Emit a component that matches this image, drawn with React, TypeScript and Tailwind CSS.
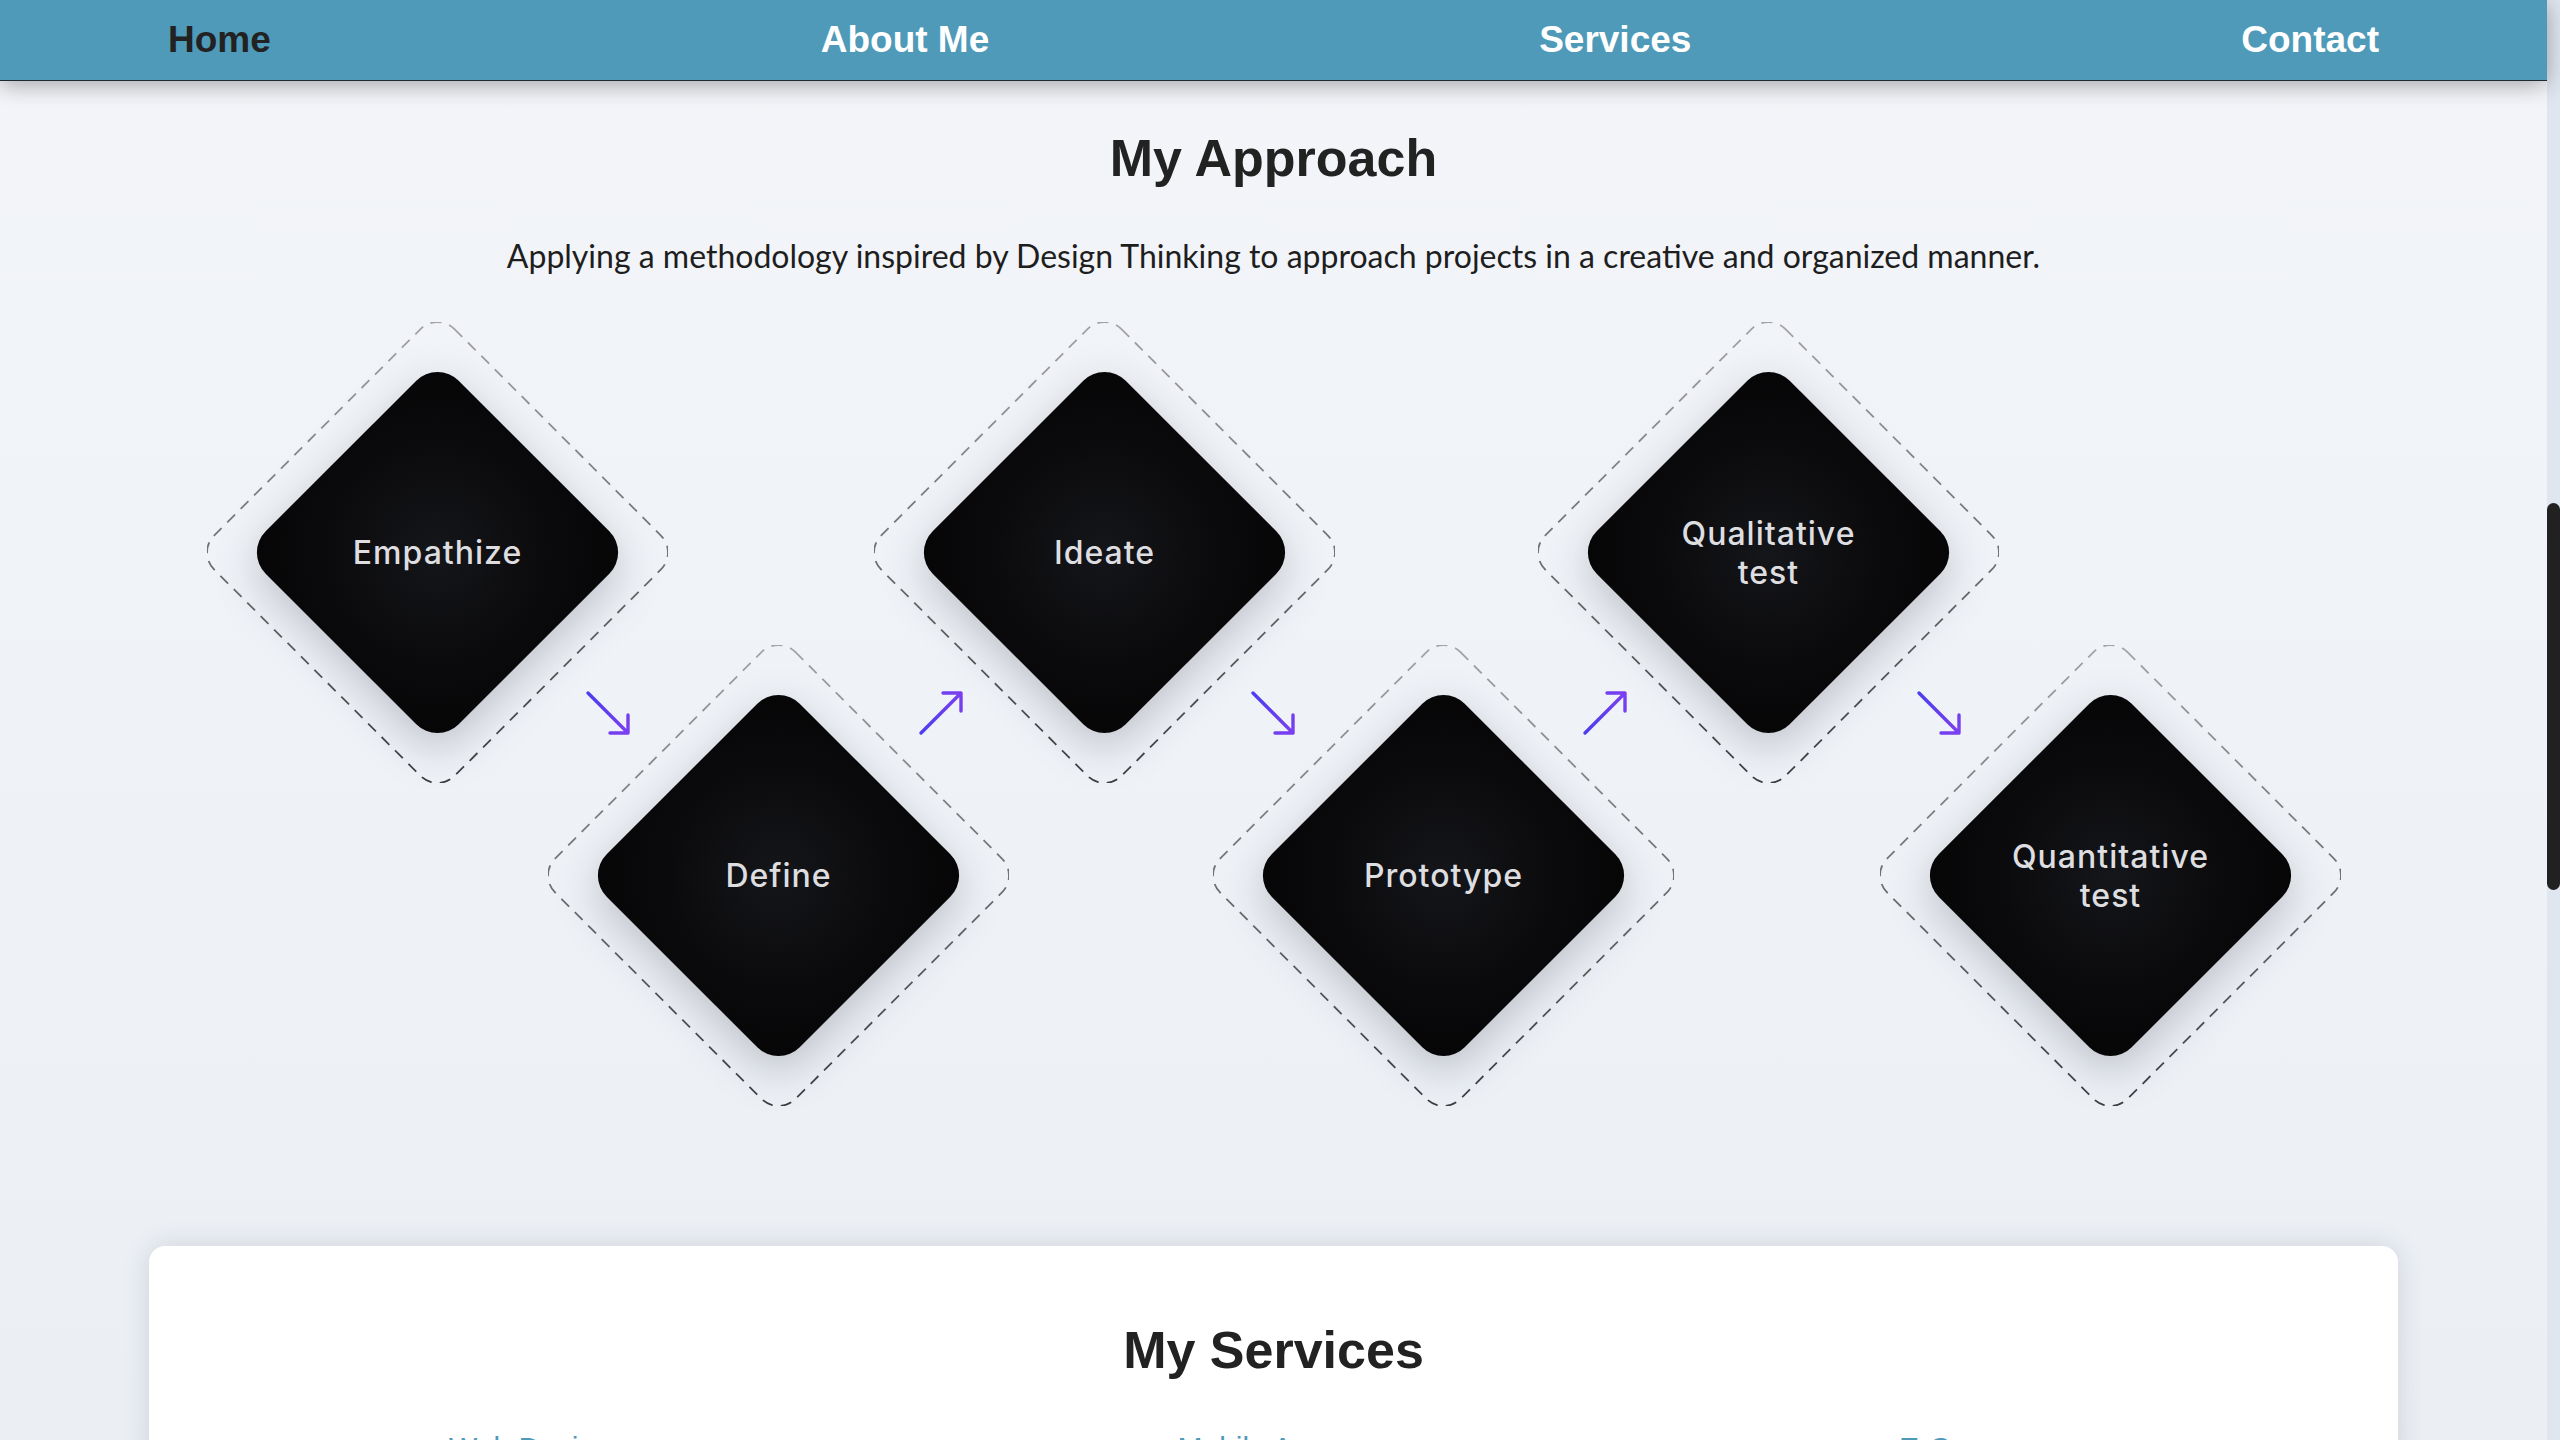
import React from "react";

const nodes = [
  { label: ["Empathize"], pos: "ml-[207px] mt-0" },
  { label: ["Define"], pos: "-ml-[120px] mt-[323px]" },
  { label: ["Ideate"], pos: "-ml-[135px] mt-0" },
  { label: ["Prototype"], pos: "-ml-[122px] mt-[323px]" },
  { label: ["Qualitative", "test"], pos: "-ml-[136px] mt-0" },
  { label: ["Quantitative", "test"], pos: "-ml-[119px] mt-[323px]" },
];

const arrows = [
  { dir: "down", pos: "left-[585px] top-[368px]" },
  { dir: "up", pos: "left-[918px] top-[368px]" },
  { dir: "down", pos: "left-[1250px] top-[368px]" },
  { dir: "up", pos: "left-[1582px] top-[368px]" },
  { dir: "down", pos: "left-[1916px] top-[368px]" },
];

function Outline({ id }: { id: string }) {
  return (
    <svg
      width="461"
      height="461"
      viewBox="0 0 461 461"
      className="[grid-area:1/1]"
      fill="none"
    >
      <defs>
        <linearGradient
          id={id}
          gradientUnits="userSpaceOnUse"
          x1="60.5"
          y1="60.5"
          x2="400.5"
          y2="400.5"
        >
          <stop offset="0" stopColor="#a6a6aa" />
          <stop offset="1" stopColor="#3c3c40" />
        </linearGradient>
      </defs>
      <rect
        x="60.5"
        y="60.5"
        width="340"
        height="340"
        rx="24"
        transform="rotate(45 230.5 230.5)"
        stroke={`url(#${id})`}
        strokeWidth="1.8"
        strokeDasharray="11 8"
      />
    </svg>
  );
}

function Node({ label, pos, idx }: { label: string[]; pos: string; idx: number }) {
  return (
    <div className={`grid h-[461px] w-[461px] shrink-0 place-items-center ${pos}`}>
      <Outline id={`dash-grad-${idx}`} />
      <div className="[grid-area:1/1] drop-shadow-[0_14px_22px_rgba(20,24,40,0.22)]">
        <div className="h-[273px] w-[273px] rotate-45 rounded-[30px] bg-[radial-gradient(circle,#15161a_0%,#0b0b0d_55%,#050506_100%)]" />
      </div>
      <div className="relative z-10 [grid-area:1/1] text-center font-['Inter','DejaVu_Sans',sans-serif] text-[32px] font-medium leading-[39px] tracking-[1px] text-[#dedee0]">
        {label.map((l) => (
          <div key={l}>{l}</div>
        ))}
      </div>
    </div>
  );
}

function Arrow({ dir, pos, idx }: { dir: string; pos: string; idx: number }) {
  const gid = `arrow-grad-${idx}`;
  return (
    <svg
      width="46"
      height="46"
      viewBox="0 0 46 46"
      className={`absolute ${pos}`}
      fill="none"
    >
      <defs>
        <linearGradient
          id={gid}
          gradientUnits="userSpaceOnUse"
          x1="2"
          y1={dir === "down" ? "2" : "44"}
          x2="44"
          y2={dir === "down" ? "44" : "2"}
        >
          <stop offset="0" stopColor="#4a3df0" />
          <stop offset="1" stopColor="#7d3ff0" />
        </linearGradient>
      </defs>
      {dir === "down" ? (
        <path
          d="M3 3 L43 43 M43 25 L43 43 L25 43"
          stroke={`url(#${gid})`}
          strokeWidth="3.4"
          strokeLinecap="round"
          strokeLinejoin="round"
        />
      ) : (
        <path
          d="M3 43 L43 3 M25 3 L43 3 L43 21"
          stroke={`url(#${gid})`}
          strokeWidth="3.4"
          strokeLinecap="round"
          strokeLinejoin="round"
        />
      )}
    </svg>
  );
}

export default function App() {
  return (
    <div className="flex h-[1440px] w-[2560px] overflow-hidden bg-[#eef2f7] font-['Liberation_Sans',Arial,sans-serif]">
      <main className="flex w-[2547px] shrink-0 flex-col bg-gradient-to-b from-[#f3f5f9] to-[#ebeff4]">
        <nav className="relative z-10 flex h-[81px] shrink-0 items-center justify-between border-b border-[#1d2b31] bg-[#4e9ab8] px-[168px] shadow-[0_4px_22px_rgba(0,0,0,0.32)]">
          <a className="text-[37px] font-bold text-[#222222]">Home</a>
          <a className="text-[37px] font-bold text-white">About Me</a>
          <a className="text-[37px] font-bold text-white">Services</a>
          <a className="text-[37px] font-bold text-white">Contact</a>
        </nav>

        <section className="flex flex-col items-center pt-[44px]">
          <h2 className="text-[52px] font-bold leading-[66px] text-[#222222]">My Approach</h2>
          <p className="mt-[42px] font-['Lato','Liberation_Sans',sans-serif] text-[32px] font-normal leading-[45px] text-[#1e1e1e]">
            Applying a methodology inspired by Design Thinking to approach projects in a creative and organized manner.
          </p>
        </section>

        <div className="relative mt-[44px] flex h-[784px] shrink-0 items-start">
          {nodes.map((n, i) => (
            <Node key={i} idx={i} label={n.label} pos={n.pos} />
          ))}
          {arrows.map((a, i) => (
            <Arrow key={i} idx={i} dir={a.dir} pos={a.pos} />
          ))}
        </div>

        <div className="mx-[149px] mt-[140px] shrink-0 rounded-2xl bg-white pt-[71px] shadow-[0_0_28px_rgba(30,40,60,0.14)]">
          <h2 className="text-center text-[52px] font-bold leading-[66px] text-[#222222]">My Services</h2>
          <div className="mt-[42px] flex pl-[300px] text-[30px] leading-[45px] text-[#4e9ab8]">
            <div className="w-[730px]">Web Design</div>
            <div className="w-[723px]">Mobile Apps</div>
            <div className="w-[500px]">E-Commerce</div>
          </div>
          <div className="h-[400px]" />
        </div>
      </main>
      <aside className="flex w-[13px] shrink-0 flex-col bg-[#dfe6ef]">
        <div className="mt-[503px] h-[387px] w-[13px] rounded-full bg-[#212121]" />
      </aside>
    </div>
  );
}
